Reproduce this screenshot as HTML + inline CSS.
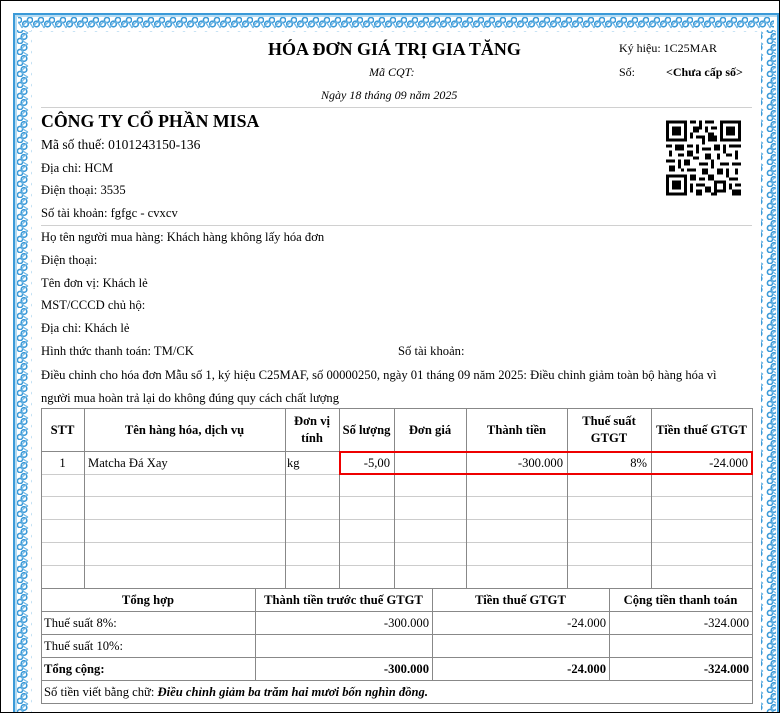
<!DOCTYPE html>
<html><head><meta charset="utf-8">
<style>
*{margin:0;padding:0;box-sizing:border-box}
html,body{width:780px;height:713px;overflow:hidden;background:#fff}
body{position:relative;font-family:"Liberation Serif",serif;font-size:12.6px;color:#000}
.a{position:absolute;white-space:nowrap;line-height:16px}
.b{font-weight:bold}
.i{font-style:italic}
.h{position:absolute;height:1px}
.v{position:absolute;width:1px}
.c{text-align:center}
.r{text-align:right}
</style></head><body>
<svg class="a" style="left:0;top:0" width="780" height="713">
<defs>
<pattern id="ph" width="11" height="15" patternUnits="userSpaceOnUse">
<circle cx="3.5" cy="9" r="2.8" fill="none" stroke="#3b9ad8" stroke-width="1.6"/>
<circle cx="8" cy="5" r="2.6" fill="none" stroke="#3b9ad8" stroke-width="1.6"/>
<path d="M0 13 Q5.5 1 11 13" fill="none" stroke="#6fb6e4" stroke-width="1.2"/>
</pattern>
<pattern id="pv" width="15" height="11" patternUnits="userSpaceOnUse">
<circle cx="9" cy="3.5" r="2.8" fill="none" stroke="#3b9ad8" stroke-width="1.6"/>
<circle cx="5" cy="8" r="2.6" fill="none" stroke="#3b9ad8" stroke-width="1.6"/>
<path d="M13 0 Q1 5.5 13 11" fill="none" stroke="#6fb6e4" stroke-width="1.2"/>
</pattern>
</defs>
<rect x="13" y="13" width="766" height="2" fill="#3b9ad8"/>
<rect x="13" y="13" width="2" height="700" fill="#3b9ad8"/>
<rect x="777" y="13" width="2" height="700" fill="#3b9ad8"/>
<rect x="15" y="15" width="762" height="2" fill="#b5dbf2"/>
<rect x="15" y="15" width="2" height="698" fill="#b5dbf2"/>
<rect x="18" y="17" width="756" height="15" fill="url(#ph)"/>
<rect x="17" y="30" width="15" height="683" fill="url(#pv)"/>
<rect x="761" y="30" width="15" height="683" fill="url(#pv)"/>
</svg>
<div class="a" style="left:0;top:0;width:780px;height:713px;border:1px solid #000"></div>

<div class="a b" style="left:268px;top:40px;font-size:18px;line-height:19px">HÓA ĐƠN GIÁ TRỊ GIA TĂNG</div>
<div class="a i" style="left:369px;top:64px;font-size:12px">Mã CQT:</div>
<div class="a i" style="left:321px;top:87px;font-size:12px">Ngày 18 tháng 09 năm 2025</div>
<div class="a" style="left:619px;top:40px;font-size:12px">Ký hiệu: 1C25MAR</div>
<div class="a" style="left:619px;top:64px;font-size:12px">Số:</div>
<div class="a b" style="left:666px;top:64px;font-size:12px">&lt;Chưa cấp số&gt;</div>
<div class="h" style="left:41px;top:107px;width:711px;background:#d0d0d0"></div>

<div class="a b" style="left:41px;top:112px;font-size:17.8px;line-height:19px">CÔNG TY CỔ PHẦN MISA</div>
<div class="a" style="left:41px;top:137px;font-size:13.5px">Mã số thuế: 0101243150-136</div>
<div class="a" style="left:41px;top:160px">Địa chỉ: HCM</div>
<div class="a" style="left:41px;top:182px">Điện thoại: 3535</div>
<div class="a" style="left:41px;top:205px">Số tài khoản: fgfgc - cvxcv</div>
<div class="h" style="left:41px;top:225px;width:711px;background:#d0d0d0"></div>

<svg class="a" style="left:666px;top:120px" width="75" height="76" viewBox="0 0 25 25" shape-rendering="crispEdges">
<g fill="#000">
<path d="M0 0h7v7h-7zM1 1v5h5v-5zM2 2h3v3h-3z" fill-rule="evenodd"/>
<path d="M18 0h7v7h-7zM19 1v5h5v-5zM20 2h3v3h-3z" fill-rule="evenodd"/>
<path d="M0 18h7v7h-7zM1 19v5h5v-5zM2 20h3v3h-3z" fill-rule="evenodd"/>
<path d="M8 0h2v1h-2zM11 0h1v3h-1zM13 0h3v1h-3zM9 2h2v2h-2zM13 2h1v2h-1zM15 2h2v1h-2zM8 4h1v2h-1zM10 5h3v1h-3zM14 4h2v3h-2zM16 5h1v2h-1zM12 6h1v2h-1z"/>
<path d="M0 8h2v1h-2zM3 8h3v2h-3zM7 8h2v1h-2zM10 8h1v3h-1zM12 9h3v1h-3zM16 8h2v2h-2zM19 8h1v3h-1zM21 8h4v1h-4zM1 10h1v2h-1zM4 11h2v1h-2zM7 10h2v2h-2zM13 11h2v2h-2zM17 11h1v2h-1zM20 11h2v1h-2zM23 10h1v3h-1z"/>
<path d="M0 13h3v1h-3zM4 13h1v3h-1zM6 13h2v2h-2zM9 12h2v1h-2zM11 14h3v1h-3zM15 13h1v3h-1zM18 14h3v1h-3zM22 14h3v1h-3zM1 15h2v2h-2zM7 16h3v1h-3zM12 16h2v2h-2zM17 16h2v2h-2zM20 16h1v3h-1zM23 16h1v2h-1zM5 16h1v1h-1z"/>
<path d="M8 18h2v2h-2zM11 19h2v1h-2zM14 18h2v2h-2zM16 20h4v4h-4zM17 21v2h2v-2zM21 19h3v1h-3zM8 21h1v3h-1zM10 21h3v1h-3zM13 22h2v2h-2zM10 23h2v2h-2zM21 21h1v2h-1zM23 21h2v1h-2zM22 23h3v2h-3zM15 24h2v1h-2z" fill-rule="evenodd"/>
</g></svg>

<div class="a" style="left:41px;top:229px">Họ tên người mua hàng: Khách hàng không lấy hóa đơn</div>
<div class="a" style="left:41px;top:252px">Điện thoại:</div>
<div class="a" style="left:41px;top:275px">Tên đơn vị: Khách lẻ</div>
<div class="a" style="left:41px;top:297px">MST/CCCD chủ hộ:</div>
<div class="a" style="left:41px;top:320px">Địa chỉ: Khách lẻ</div>
<div class="a" style="left:41px;top:343px">Hình thức thanh toán: TM/CK</div>
<div class="a" style="left:398px;top:343px">Số tài khoản:</div>
<div class="a" style="left:41px;top:367px">Điều chỉnh cho hóa đơn Mẫu số 1, ký hiệu C25MAF, số 00000250, ngày 01 tháng 09 năm 2025: Điều chỉnh giảm toàn bộ hàng hóa vì</div>
<div class="a" style="left:41px;top:390px">người mua hoàn trả lại do không đúng quy cách chất lượng</div>

<div class="h" style="left:41px;top:408px;width:712px;background:#888"></div>
<div class="h" style="left:41px;top:451px;width:712px;background:#888"></div>
<div class="h" style="left:41px;top:474px;width:712px;background:#ccc"></div>
<div class="h" style="left:41px;top:496px;width:712px;background:#ccc"></div>
<div class="h" style="left:41px;top:519px;width:712px;background:#ccc"></div>
<div class="h" style="left:41px;top:542px;width:712px;background:#ccc"></div>
<div class="h" style="left:41px;top:565px;width:712px;background:#ccc"></div>
<div class="h" style="left:41px;top:588px;width:712px;background:#888"></div>
<div class="h" style="left:41px;top:611px;width:712px;background:#888"></div>
<div class="h" style="left:41px;top:634px;width:712px;background:#888"></div>
<div class="h" style="left:41px;top:657px;width:712px;background:#888"></div>
<div class="h" style="left:41px;top:680px;width:712px;background:#888"></div>
<div class="h" style="left:41px;top:703px;width:712px;background:#888"></div>
<div class="v" style="left:41px;top:408px;height:296px;background:#888"></div>
<div class="v" style="left:752px;top:408px;height:296px;background:#888"></div>
<div class="v" style="left:84px;top:408px;height:180px;background:#888"></div>
<div class="v" style="left:285px;top:408px;height:180px;background:#888"></div>
<div class="v" style="left:339px;top:408px;height:180px;background:#888"></div>
<div class="v" style="left:394px;top:408px;height:180px;background:#888"></div>
<div class="v" style="left:466px;top:408px;height:180px;background:#888"></div>
<div class="v" style="left:567px;top:408px;height:180px;background:#888"></div>
<div class="v" style="left:651px;top:408px;height:180px;background:#888"></div>
<div class="v" style="left:255px;top:588px;height:92px;background:#888"></div>
<div class="v" style="left:432px;top:588px;height:92px;background:#888"></div>
<div class="v" style="left:609px;top:588px;height:92px;background:#888"></div>

<div class="a b c" style="left:41px;top:422px;width:43px">STT</div>
<div class="a b c" style="left:84px;top:422px;width:201px">Tên hàng hóa, dịch vụ</div>
<div class="a b c" style="left:285px;top:413px;width:54px;line-height:17px">Đơn vị<br>tính</div>
<div class="a b c" style="left:339px;top:422px;width:55px">Số lượng</div>
<div class="a b c" style="left:394px;top:422px;width:72px">Đơn giá</div>
<div class="a b c" style="left:466px;top:422px;width:101px">Thành tiền</div>
<div class="a b c" style="left:567px;top:413px;width:84px;line-height:17px">Thuế suất<br>GTGT</div>
<div class="a b c" style="left:651px;top:422px;width:101px">Tiền thuế GTGT</div>

<div class="a c" style="left:41px;top:455px;width:43px">1</div>
<div class="a" style="left:88px;top:455px">Matcha Đá Xay</div>
<div class="a" style="left:287px;top:455px">kg</div>
<div class="a r" style="left:339px;top:455px;width:51px">-5,00</div>
<div class="a r" style="left:466px;top:455px;width:97px">-300.000</div>
<div class="a r" style="left:567px;top:455px;width:80px">8%</div>
<div class="a r" style="left:651px;top:455px;width:97px">-24.000</div>
<div class="a" style="left:339px;top:451px;width:414px;height:24px;border:2px solid #e00"></div>

<div class="a b c" style="left:41px;top:592px;width:214px">Tổng hợp</div>
<div class="a b c" style="left:255px;top:592px;width:177px">Thành tiền trước thuế GTGT</div>
<div class="a b c" style="left:432px;top:592px;width:177px">Tiền thuế GTGT</div>
<div class="a b c" style="left:609px;top:592px;width:143px">Cộng tiền thanh toán</div>
<div class="a" style="left:44px;top:615px">Thuế suất 8%:</div>
<div class="a r" style="left:255px;top:615px;width:174px">-300.000</div>
<div class="a r" style="left:432px;top:615px;width:174px">-24.000</div>
<div class="a r" style="left:609px;top:615px;width:140px">-324.000</div>
<div class="a" style="left:44px;top:638px">Thuế suất 10%:</div>
<div class="a b" style="left:44px;top:661px">Tổng cộng:</div>
<div class="a b r" style="left:255px;top:661px;width:174px">-300.000</div>
<div class="a b r" style="left:432px;top:661px;width:174px">-24.000</div>
<div class="a b r" style="left:609px;top:661px;width:140px">-324.000</div>
<div class="a" style="left:44px;top:684px">Số tiền viết bằng chữ: <b><i>Điều chỉnh giảm ba trăm hai mươi bốn nghìn đồng.</i></b></div>
</body></html>
